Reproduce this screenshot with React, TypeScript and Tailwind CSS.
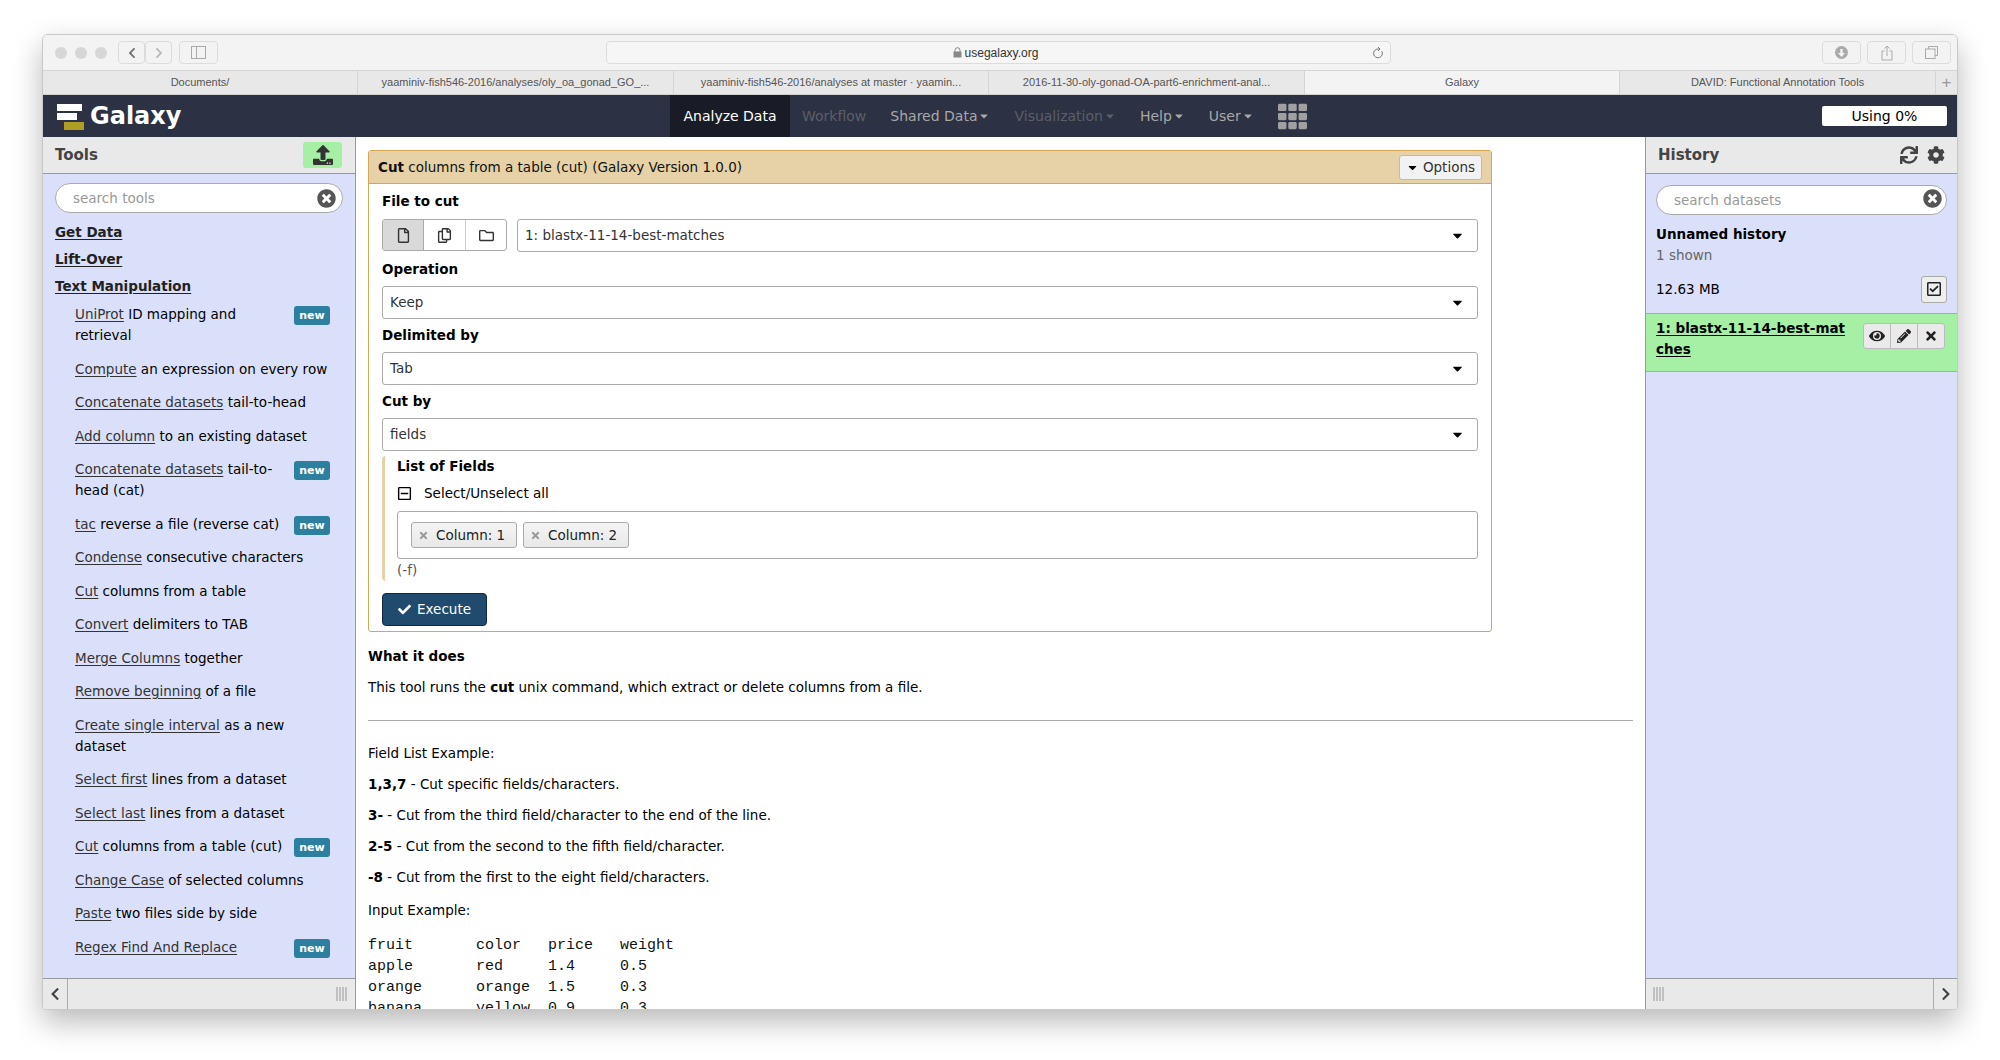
import { ReactNode } from "react";
import {
  FaCaretDown,
  FaCheck,
  FaChevronLeft,
  FaChevronRight,
  FaCog,
  FaEye,
  FaPencilAlt,
  FaRegCheckSquare,
  FaRegCopy,
  FaRegFile,
  FaRegFolder,
  FaRegMinusSquare,
  FaSync,
  FaTh,
  FaTimes,
  FaTimesCircle,
  FaUpload,
} from "react-icons/fa";

const tabs = [
  { title: "Documents/", w: "w-[315px]" },
  { title: "yaaminiv-fish546-2016/analyses/oly_oa_gonad_GO_...", w: "w-[316px]" },
  { title: "yaaminiv-fish546-2016/analyses at master · yaamin...", w: "w-[315px]" },
  { title: "2016-11-30-oly-gonad-OA-part6-enrichment-anal...", w: "w-[316px]" },
  { title: "Galaxy", w: "w-[315px]", active: true },
  { title: "DAVID: Functional Annotation Tools", w: "w-[316px]" },
];

const tools = [
  { link: "UniProt", rest: " ID mapping and retrieval", isNew: true },
  { link: "Compute", rest: " an expression on every row" },
  { link: "Concatenate datasets", rest: " tail-to-head" },
  { link: "Add column", rest: " to an existing dataset" },
  { link: "Concatenate datasets", rest: " tail-to-head (cat)", isNew: true },
  { link: "tac", rest: " reverse a file (reverse cat)", isNew: true },
  { link: "Condense", rest: " consecutive characters" },
  { link: "Cut", rest: " columns from a table" },
  { link: "Convert", rest: " delimiters to TAB" },
  { link: "Merge Columns", rest: " together" },
  { link: "Remove beginning", rest: " of a file" },
  { link: "Create single interval", rest: " as a new dataset" },
  { link: "Select first", rest: " lines from a dataset" },
  { link: "Select last", rest: " lines from a dataset" },
  { link: "Cut", rest: " columns from a table (cut)", isNew: true },
  { link: "Change Case", rest: " of selected columns" },
  { link: "Paste", rest: " two files side by side" },
  { link: "Regex Find And Replace", rest: "", isNew: true },
];

function ToolbarButton({ children, className = "" }: { children: ReactNode; className?: string }) {
  return (
    <div className={`flex h-[23px] items-center justify-center rounded-[4px] border border-[#dcdcdc] text-[#8a8a8a] ${className}`}>
      {children}
    </div>
  );
}

function FormSelect({ value }: { value: string }) {
  return (
    <div className="flex h-[33px] flex-1 items-center justify-between rounded-[3px] border border-[#aaaaaa] pl-[7px] pr-[12px] text-[#333]">
      <span>{value}</span>
      <FaCaretDown className="text-[15px] text-black" />
    </div>
  );
}

function NavItem({ label, caret, dim }: { label: string; caret?: boolean; dim?: boolean }) {
  return (
    <div className={`flex items-center gap-[1px] ${dim ? "text-[#5c5f69]" : "text-[#a8a8a8]"}`}>
      <span>{label}</span>
      {caret && <FaCaretDown className="text-[12px]" />}
    </div>
  );
}

function Tag({ label }: { label: string }) {
  return (
    <div className="flex h-[26px] w-[106px] items-center gap-[7px] rounded-[3px] border border-[#aaaaaa] bg-[linear-gradient(#f4f4f4,#e8e8e8)] pl-[6px] text-[#222]">
      <FaTimes className="text-[11px] text-[#999]" />
      <span>{label}</span>
    </div>
  );
}

function PanelFooter({ side }: { side: "left" | "right" }) {
  const grip = (
    <div className="flex h-[14px] gap-[1px]">
      <div className="w-[2px] bg-[#c0c0c0]" />
      <div className="w-[2px] bg-[#c0c0c0]" />
      <div className="w-[2px] bg-[#c0c0c0]" />
      <div className="w-[2px] bg-[#c0c0c0]" />
    </div>
  );
  if (side === "left") {
    return (
      <div className="flex h-[31px] shrink-0 items-center border-t border-[#999] bg-[#e9e9e9]">
        <div className="flex h-full w-[25px] items-center justify-center border-r border-[#aaa] text-[#444]">
          <FaChevronLeft className="text-[14px]" />
        </div>
        <div className="flex flex-1 justify-end pr-[8px]">{grip}</div>
      </div>
    );
  }
  return (
    <div className="flex h-[31px] shrink-0 items-center border-t border-[#999] bg-[#e9e9e9]">
      <div className="flex flex-1 pl-[7px]">{grip}</div>
      <div className="flex h-full w-[24px] items-center justify-center border-l border-[#aaa] text-[#444]">
        <FaChevronRight className="text-[14px]" />
      </div>
    </div>
  );
}

export default function App() {
  return (
    <div className="h-[1060px] w-[2000px] overflow-hidden bg-white pl-[42px] pt-[34px] font-['DejaVu_Sans',sans-serif] text-[13.5px] text-black">
      <div className="flex h-[976px] w-[1916px] flex-col overflow-hidden rounded-t-[6px] rounded-b-[4px] border-x border-b border-t border-[#c8c8c8] bg-white shadow-[0_12px_30px_rgba(0,0,0,0.28)]">
        {/* browser chrome */}
        <div className="flex h-[36px] shrink-0 items-center border-b border-[#d4d4d4] bg-[#f3f3f3] pl-[12px] pr-[6px]">
          <div className="flex gap-[8px]">
            <div className="h-[12px] w-[12px] rounded-full bg-[#d6d6d6]" />
            <div className="h-[12px] w-[12px] rounded-full bg-[#d6d6d6]" />
            <div className="h-[12px] w-[12px] rounded-full bg-[#d6d6d6]" />
          </div>
          <div className="ml-[11px] flex">
            <ToolbarButton className="w-[27px]">
              <FaChevronLeft className="text-[12px] text-[#777]" />
            </ToolbarButton>
            <ToolbarButton className="w-[27px]">
              <FaChevronRight className="text-[12px] text-[#bbb]" />
            </ToolbarButton>
          </div>
          <ToolbarButton className="ml-[7px] w-[39px]">
            <div className="flex h-[13px] w-[15px] border border-[#aaa]">
              <div className="w-[5px] border-r border-[#aaa]" />
            </div>
          </ToolbarButton>
          <div className="ml-[388px] flex h-[23px] w-[785px] items-center rounded-[4px] border border-[#dcdcdc] bg-[#f6f6f6] pr-[6px]">
            <div className="flex flex-1 items-center justify-center gap-[3px] pl-[12px] font-['Liberation_Sans',sans-serif] text-[12px] text-[#333]">
              <svg width="9" height="11" viewBox="0 0 9 11">
                <path d="M2 5V3.2a2.5 2.5 0 0 1 5 0V5" fill="none" stroke="#888" strokeWidth="1" />
                <rect x="0.5" y="4.5" width="8" height="6" fill="#888" />
              </svg>
              <span>usegalaxy.org</span>
            </div>
            <svg width="12" height="14" viewBox="0 0 12 14" fill="none" stroke="#777" strokeWidth="1">
              <path d="M9.8 5.2A4.4 4.4 0 1 1 6 3h1.5" />
              <path d="M6 1l2 2-2 2" />
            </svg>
          </div>
          <div className="ml-auto flex gap-[6px]">
            <ToolbarButton className="w-[39px]">
              <div className="flex h-[13px] w-[13px] items-center justify-center rounded-full bg-[#aaa]">
                <svg width="7" height="8" viewBox="0 0 7 8">
                  <path d="M2.3 0h2.4v4H7L3.5 8 0 4h2.3z" fill="#f3f3f3" />
                </svg>
              </div>
            </ToolbarButton>
            <ToolbarButton className="w-[39px]">
              <svg width="12" height="16" viewBox="0 0 12 16" fill="none" stroke="#aaa">
                <path d="M3.5 6H1v9h10V6H8.5M6 11V1M3.5 3.5L6 1l2.5 2.5" />
              </svg>
            </ToolbarButton>
            <ToolbarButton className="w-[39px]">
              <svg width="13" height="13" viewBox="0 0 13 13" fill="none" stroke="#aaa">
                <path d="M3.5 3V.5h9v9H10" />
                <rect x="0.5" y="3" width="9.5" height="9.5" />
              </svg>
            </ToolbarButton>
          </div>
        </div>

        <div className="flex h-[24px] shrink-0 items-center border-b border-[#d0d0d0] bg-[#e8e8e8] font-['Liberation_Sans',sans-serif] text-[11px] text-[#555]">
          {tabs.map((t) => (
            <div
              key={t.title}
              className={`flex h-full items-center justify-center border-r border-[#d4d4d4] ${t.w} ${t.active ? "bg-[#f3f3f3]" : ""}`}
            >
              {t.title}
            </div>
          ))}
          <div className="flex flex-1 items-center justify-center text-[17px] font-light text-[#999]">+</div>
        </div>

        {/* galaxy masthead */}
        <div className="flex h-[42px] shrink-0 items-center bg-[#2c3143] text-[14px]">
          <div className="flex w-[627px] items-center pl-[14px]">
            <svg width="28" height="30" viewBox="0 0 28 30">
              <rect x="0" y="3" width="25" height="7" fill="#fff" />
              <rect x="0" y="12" width="20" height="7" fill="#fff" />
              <rect x="7" y="21" width="20" height="8" fill="#c8b01e" opacity="0.85" />
            </svg>
            <span className="ml-[5px] text-[24px] font-bold leading-none text-white">Galaxy</span>
          </div>
          <div className="flex h-full w-[120px] items-center justify-center bg-[#191c26] text-white">Analyze Data</div>
          <div className="ml-[12px] flex items-center gap-[24px]">
            <NavItem label="Workflow" dim />
            <NavItem label="Shared Data" caret />
            <NavItem label="Visualization" caret dim />
            <NavItem label="Help" caret />
            <NavItem label="User" caret />
            <FaTh className="text-[29px] text-[#a0a0a0]" />
          </div>
          <div className="ml-auto mr-[10px] flex h-[20px] w-[125px] items-center justify-center rounded-[2px] bg-white text-black">
            Using 0%
          </div>
        </div>

        <div className="flex min-h-0 flex-1">
          {/* tools panel */}
          <div className="flex w-[313px] shrink-0 flex-col border-r border-[#999] bg-[#dae0f9]">
            <div className="flex h-[37px] shrink-0 items-center justify-between border-b border-[#999] bg-[#e9e9e9] pl-[12px] pr-[13px]">
              <span className="text-[15px] font-bold text-[#444]">Tools</span>
              <div className="flex h-[26px] w-[39px] items-center justify-center rounded-[3px] bg-[#a6f0a6] text-[#333]">
                <FaUpload className="text-[20px]" />
              </div>
            </div>
            <div className="min-h-0 flex-1 overflow-hidden px-[12px] pt-[9px]">
              <div className="flex h-[30px] items-center justify-between rounded-full border border-[#aaa] bg-white pl-[17px] pr-[6px] text-[#999]">
                <span>search tools</span>
                <FaTimesCircle className="text-[19px] text-[#555]" />
              </div>
              <div className="mt-[6px] flex flex-col font-bold text-[#222] underline underline-offset-2">
                <span className="leading-[27px]">Get Data</span>
                <span className="leading-[27px]">Lift-Over</span>
                <span className="leading-[27px]">Text Manipulation</span>
              </div>
              <div className="mt-[4px] pl-[20px] pr-[13px] leading-[21px]">
                {tools.map((t, i) => (
                  <div key={i} className="mb-[12.5px] flow-root">
                    {t.isNew && (
                      <span className="float-right ml-[4px] mt-[2px] flex h-[19px] w-[36px] items-center justify-center rounded-[3px] bg-[#2c7f9f] text-[11px] font-bold leading-none text-white">
                        new
                      </span>
                    )}
                    <span className="text-[#333] underline underline-offset-2">{t.link}</span>
                    {t.rest}
                  </div>
                ))}
              </div>
            </div>
            <PanelFooter side="left" />
          </div>

          {/* center */}
          <div className="min-w-0 flex-1 overflow-hidden px-[12px] pt-[13px]">
            <div className="w-[1124px] rounded-[3px] border border-[#d5a653]">
              <div className="flex h-[33px] items-center justify-between border-b border-[#d5a653] bg-[#e6d2a6] pl-[9px] pr-[9px] text-[#111]">
                <div>
                  <b>Cut</b> columns from a table (cut) (Galaxy Version 1.0.0)
                </div>
                <div className="flex h-[25px] items-center gap-[4px] rounded-[3px] border border-[#bbb] bg-[#f2f2f2] px-[6px] text-[#333]">
                  <FaCaretDown className="text-[13px] text-black" />
                  Options
                </div>
              </div>
              <div className="px-[13px] pb-[5px]">
                <div className="flex h-[35px] items-center font-bold">File to cut</div>
                <div className="flex gap-[10px]">
                  <div className="flex h-[32px] w-[125px] overflow-hidden rounded-[3px] border border-[#aaa] text-[#333]">
                    <div className="flex w-[41px] items-center justify-center border-r border-[#aaa] bg-[#d9d9d9]">
                      <FaRegFile className="text-[15px]" />
                    </div>
                    <div className="flex w-[42px] items-center justify-center border-r border-[#ccc]">
                      <FaRegCopy className="text-[15px]" />
                    </div>
                    <div className="flex flex-1 items-center justify-center">
                      <FaRegFolder className="text-[15px]" />
                    </div>
                  </div>
                  <FormSelect value="1: blastx-11-14-best-matches" />
                </div>
                <div className="flex h-[34px] items-center font-bold">Operation</div>
                <FormSelect value="Keep" />
                <div className="flex h-[33px] items-center font-bold">Delimited by</div>
                <FormSelect value="Tab" />
                <div className="flex h-[33px] items-center font-bold">Cut by</div>
                <FormSelect value="fields" />
                <div className="mt-[5px] rounded-l-[4px] border-l-[3px] border-[#e6d2a6] pl-[12px]">
                  <div className="flex h-[20px] items-center font-bold">List of Fields</div>
                  <div className="mt-[6px] flex h-[22px] items-center gap-[12px]">
                    <FaRegMinusSquare className="text-[15px]" />
                    <span>Select/Unselect all</span>
                  </div>
                  <div className="mt-[7px] flex h-[48px] items-center gap-[6px] rounded-[3px] border border-[#aaa] pl-[13px]">
                    <Tag label="Column: 1" />
                    <Tag label="Column: 2" />
                  </div>
                  <div className="flex h-[22px] items-center text-[#555]">(-f)</div>
                </div>
                <div className="mt-[12px] flex h-[33px] w-[105px] items-center justify-center gap-[6px] rounded-[4px] border border-[#14283c] bg-[#204a6e] text-white">
                  <FaCheck className="text-[13px]" />
                  Execute
                </div>
              </div>
            </div>

            <div className="mt-[14px] font-bold leading-[21px]">What it does</div>
            <div className="mt-[10px] leading-[21px]">
              This tool runs the <b>cut</b> unix command, which extract or delete columns from a file.
            </div>
            <hr className="mt-[22px] border-t border-[#aaa]" />
            <div className="mt-[22px] leading-[21px]">Field List Example:</div>
            <div className="mt-[10px] leading-[21px]"><b>1,3,7</b> - Cut specific fields/characters.</div>
            <div className="mt-[10px] leading-[21px]"><b>3-</b> - Cut from the third field/character to the end of the line.</div>
            <div className="mt-[10px] leading-[21px]"><b>2-5</b> - Cut from the second to the fifth field/character.</div>
            <div className="mt-[10px] leading-[21px]"><b>-8</b> - Cut from the first to the eight field/characters.</div>
            <div className="mt-[12px] leading-[21px]">Input Example:</div>
            <pre className="mt-[14px] font-['Liberation_Mono',monospace] text-[15px] leading-[21px] text-[#111]">
              {"fruit       color   price   weight\napple       red     1.4     0.5\norange      orange  1.5     0.3\nbanana      yellow  0.9     0.3"}
            </pre>
          </div>

          {/* history panel */}
          <div className="flex w-[312px] shrink-0 flex-col border-l border-[#999] bg-[#dae0f9]">
            <div className="flex h-[37px] shrink-0 items-center justify-between border-b border-[#999] bg-[#e9e9e9] pl-[12px] pr-[12px] text-[#444]">
              <span className="text-[15px] font-bold">History</span>
              <div className="flex items-center gap-[9px]">
                <FaSync className="text-[18px]" />
                <FaCog className="text-[18px]" />
              </div>
            </div>
            <div className="px-[10px] pt-[11px]">
              <div className="flex h-[30px] items-center justify-between rounded-full border border-[#aaa] bg-white pl-[17px] pr-[4px] text-[#999]">
                <span>search datasets</span>
                <FaTimesCircle className="-mt-[4px] text-[19px] text-[#555]" />
              </div>
              <div className="mt-[9px] font-bold leading-[21px]">Unnamed history</div>
              <div className="leading-[21px] text-[#666]">1 shown</div>
              <div className="mt-[9px] flex h-[28px] items-center justify-between">
                <span>12.63 MB</span>
                <div className="flex h-[27px] w-[26px] items-center justify-center rounded-[3px] border border-[#aaa] bg-[#eee]">
                  <FaRegCheckSquare className="text-[16px] text-[#222]" />
                </div>
              </div>
            </div>
            <div className="mt-[10px] flex h-[59px] shrink-0 justify-between border-y border-[#aaa] bg-[#a6f0a6] pl-[10px] pr-[12px]">
              <div className="w-[190px] break-all pt-[4px] font-bold leading-[21px] underline underline-offset-2">
                1: blastx-11-14-best-matches
              </div>
              <div className="mt-[9px] flex h-[26px] w-[82px] overflow-hidden rounded-[3px] border border-[#bbb] bg-[#eaeaea] text-[#222]">
                <div className="flex flex-1 items-center justify-center border-r border-[#bbb]">
                  <FaEye className="text-[16px]" />
                </div>
                <div className="flex flex-1 items-center justify-center border-r border-[#bbb]">
                  <FaPencilAlt className="text-[14px]" />
                </div>
                <div className="flex flex-1 items-center justify-center">
                  <FaTimes className="text-[14px]" />
                </div>
              </div>
            </div>
            <div className="flex-1" />
            <PanelFooter side="right" />
          </div>
        </div>
      </div>
    </div>
  );
}
